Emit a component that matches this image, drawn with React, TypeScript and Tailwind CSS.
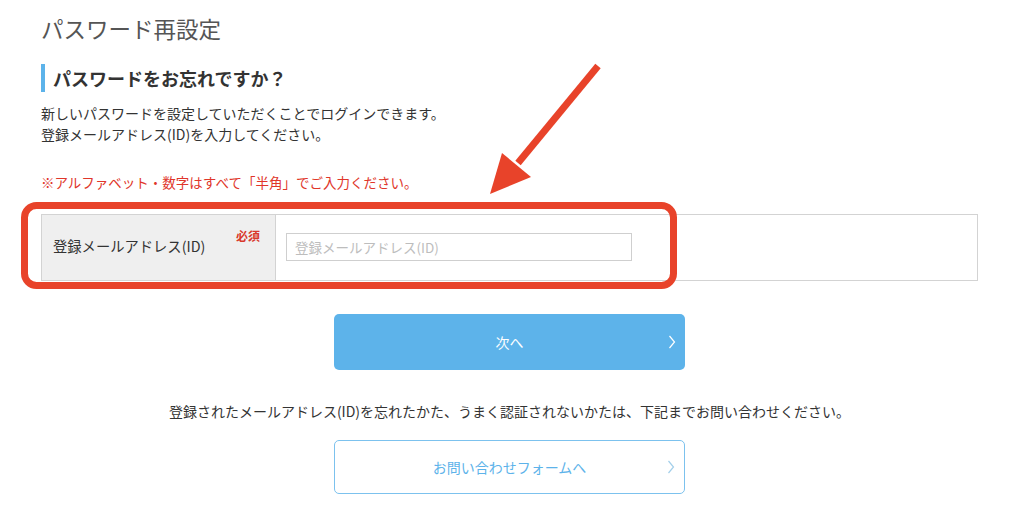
import React from "react";

const Chevron = ({ color }: { color: string }) => (
  <svg width="8" height="14" viewBox="0 0 8 14" fill="none">
    <polyline points="1.5,1 6.5,7 1.5,13" stroke={color} strokeWidth="1.2" strokeLinejoin="miter" />
  </svg>
);

export default function App() {
  return (
    <div
      className="relative w-[1024px] h-[526px] bg-white overflow-hidden text-[#333]"
      style={{ fontFamily: '"Noto Sans CJK JP", "Noto Sans", sans-serif' }}
    >
      <div className="pl-[41px] w-[978px]">
        <h1 className="pt-[14px] text-[22.5px] leading-[28px] text-[#555] font-normal">パスワード再設定</h1>
        <h2 className="mt-[22px] border-l-4 border-[#5cb3ea] pl-[8px] text-[18px] leading-[28px] font-bold text-[#333]">
          パスワードをお忘れですか？
        </h2>
        <p className="mt-[11px] text-[14px] leading-[21px] text-[#333]">
          新しいパスワードを設定していただくことでログインできます。
          <br />
          登録メールアドレス(ID)を入力してください。
        </p>
        <p className="mt-[27px] text-[13.5px] leading-[21px] text-[#e0362a]">
          ※アルファベット・数字はすべて「半角」でご入力ください。
        </p>

        <div className="mt-[21px] flex h-[67px] border border-[#d3d3d3]">
          <div className="w-[234px] flex justify-between bg-[#efefef] border-r border-[#d3d3d3] pl-[11px] pr-[15px]">
            <span className="self-center text-[14.3px] leading-[20px] text-[#333] mt-[-4px]">登録メールアドレス(ID)</span>
            <span className="self-start mt-[13px] text-[12px] leading-[16px] font-bold text-[#d9382b]">必須</span>
          </div>
          <div className="flex items-start pl-[10px] pt-[18px]">
            <input
              className="w-[346px] h-[28px] border border-[#cfcfcf] px-[8px] text-[13.5px] text-[#333] placeholder:text-[#bdbdbd] outline-none"
              placeholder="登録メールアドレス(ID)"
            />
          </div>
        </div>

        <div className="mt-[33px] flex justify-center">
          <button className="relative w-[351px] h-[56px] rounded-[5px] bg-[#5db3ea] text-white text-[14px] flex items-center justify-center">
            次へ
            <span className="absolute right-[9px] top-[21px]">
              <Chevron color="#ffffff" />
            </span>
          </button>
        </div>

        <p className="mt-[31px] text-center text-[14px] leading-[21px] text-[#333]">
          登録されたメールアドレス(ID)を忘れたかた、うまく認証されないかたは、下記までお問い合わせください。
        </p>

        <div className="mt-[18px] flex justify-center">
          <button className="relative w-[351px] h-[54px] rounded-[5px] border border-[#7cc2ee] bg-white text-[#5db3ea] text-[14px] flex items-center justify-center">
            お問い合わせフォームへ
            <span className="absolute right-[9px] top-[19px]">
              <Chevron color="#a3cfea" />
            </span>
          </button>
        </div>
      </div>

      <svg
        className="absolute inset-0 pointer-events-none"
        width="1024"
        height="526"
        viewBox="0 0 1024 526"
      >
        <rect x="24.5" y="205.5" width="649" height="80" rx="12" fill="none" stroke="#e8432a" strokeWidth="7" />
        <line x1="598" y1="66" x2="518" y2="163" stroke="#e8432a" strokeWidth="7" />
        <polygon points="490,194 502,153 531,177" fill="#e8432a" />
      </svg>
    </div>
  );
}
